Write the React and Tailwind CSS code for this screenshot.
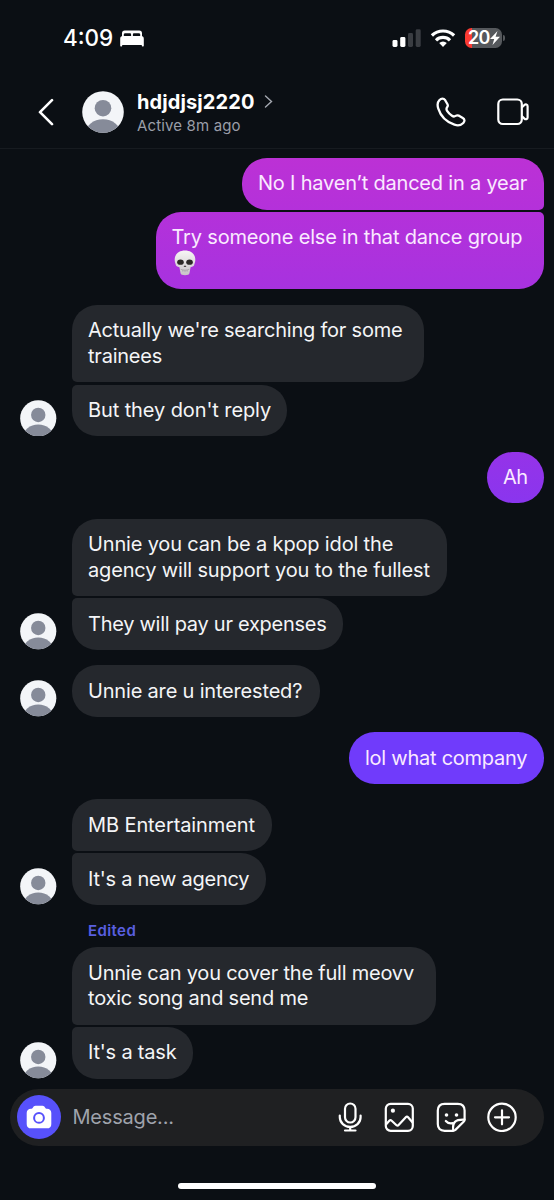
import React from "react";

function Avatar({ className }) {
  return (
    <svg viewBox="0 0 42 42" className={className} aria-hidden="true">
      <defs>
        <clipPath id="avatar-clip">
          <circle cx="21" cy="21" r="20.8" />
        </clipPath>
      </defs>
      <circle cx="21" cy="21" r="20.8" fill="#f3f5f8" />
      <g clipPath="url(#avatar-clip)" fill="#868b99">
        <circle cx="21" cy="17.2" r="8.3" />
        <ellipse cx="21" cy="42.5" rx="17.5" ry="14.3" />
      </g>
    </svg>
  );
}

function Skull() {
  return (
    <svg viewBox="0 0 24 28" className="ml-[1.500px] block h-[27px] w-[24px]" role="img" aria-label="skull">
      <defs>
        <linearGradient id="bone" x1="0" y1="0" x2="0" y2="1">
          <stop offset="0" stopColor="#f7f6f5" />
          <stop offset="1" stopColor="#c9c4c8" />
        </linearGradient>
      </defs>
      <path d="M12 .5C5.500.5 1.300 4.500 1.300 10c0 2.400.8 3.300 1 4.900.2 2 1.700 2.500 3.900 3l1.200 6.200c.3 1.500 2 2 4.600 2s4.300-.5 4.600-2l1.200-6.200c2.200-.5 3.700-1 3.900-3 .2-1.600 1-2.500 1-4.900C22.700 4.500 18.500.5 12 .5Z" fill="url(#bone)" />
      <ellipse cx="7.300" cy="12.600" rx="3.400" ry="2.700" fill="#2c2927" />
      <ellipse cx="16.700" cy="12.600" rx="3.400" ry="2.700" fill="#2c2927" />
      <path d="M12 15.700l-1.500 2h1l.5-.5.5.5h1z" fill="#2c2927" />
      <path d="M7.500 20c2.500 1.200 6.500 1.200 9 0M9.800 20.500v2M12 20.900v2M14.200 20.500v2" stroke="#99959b" strokeWidth=".6" fill="none" />
    </svg>
  );
}

function StatusBar() {
  return (
    <div className="flex h-[76px] items-center justify-between pr-[49px] pl-[63px]">
      <div className="flex items-center gap-[6px]">
        <span className="w-[51px] text-[22.5px] leading-none font-medium tracking-[0px] whitespace-nowrap">4:09</span>
        <svg viewBox="0 0 24 17" className="h-[17px] w-[24px]" fill="#fff">
          <path d="M2 7V3.200C2 1.400 3 .5 4.700.5h14.600c1.700 0 2.700.9 2.700 2.700V7h-1.800V4.800c0-1-.5-1.500-1.500-1.500h-4.400c-.9 0-1.400.5-1.400 1.400V6h-1.800V4.700c0-.9-.5-1.400-1.400-1.400H5.300c-1 0-1.500.5-1.500 1.500V7z" />
          <path d="M2.800 6h18.400c1.700 0 2.600 1 2.600 2.700v7.100c0 .4-.3.700-.7.700h-.6c-.4 0-.7-.3-.7-.7V15H2.200v.8c0 .4-.3.700-.7.700H.9c-.4 0-.7-.3-.7-.7V8.700C.2 7 1.100 6 2.800 6Z" />
        </svg>
      </div>
      <div className="flex items-center">
        <svg viewBox="0 0 29 19" className="mr-[9px] h-[19px] w-[29px]">
          <rect x=".5" y="11" width="5" height="7" rx="1.400" fill="#fff" />
          <rect x="8.200" y="8" width="5.200" height="10" rx="1.400" fill="#fff" />
          <rect x="16" y="4" width="5" height="14" rx="1.400" fill="#3a3d42" />
          <rect x="23.700" y=".3" width="5" height="17.700" rx="1.400" fill="#3a3d42" />
        </svg>
        <svg viewBox="0 0 26 19" className="mr-[9px] h-[19px] w-[26px]" fill="none" stroke="#fff" strokeWidth="3.200">
          <path d="M1.900 6.500a16 16 0 0 1 22.200 0" />
          <path d="M6 11.300a10 10 0 0 1 14 0" />
          <path d="M13 18l-3.800-3.900a5.500 5.500 0 0 1 7.600 0z" fill="#fff" stroke="none" />
        </svg>
        <div className="mt-[-1px] flex h-[20px] w-[37px] items-center overflow-hidden rounded-[6.500px] bg-linear-to-r from-[#fb3a32] from-20% to-[#55585c] to-20%">
          <span className="w-[23px] pl-[3px] text-[18px] leading-none font-semibold tracking-[-0.7px]">20</span>
          <svg viewBox="0 0 10 14" className="ml-[1.500px] h-[14px] w-[10px] shrink-0" fill="#fff">
            <path d="M7.500 0L0 8h4.200L2.500 14 10 5.800H5.600z" />
          </svg>
        </div>
        <div className="ml-[1px] h-[6px] w-[2px] rounded-r-full bg-[#55585c]" />
      </div>
    </div>
  );
}

function Header() {
  return (
    <header className="flex h-[73px] items-center border-b border-[#171b20] pr-[25px] pl-[37px]">
      <svg viewBox="0 0 18 28" className="h-[28px] w-[18px]" fill="none" stroke="#fff" strokeWidth="2.600" strokeLinecap="round" strokeLinejoin="round">
        <path d="M15 2.200L3 14.200l12 12" />
      </svg>
      <Avatar className="ml-[27px] h-[42px] w-[42px]" />
      <div className="ml-[13px] flex-1 pt-[2px]">
        <div className="flex items-center">
          <span className="w-[118px] text-[20px] leading-[25px] font-bold tracking-[0.1px] whitespace-nowrap">hdjdjsj2220</span>
          <svg viewBox="0 0 9 14" className="ml-[9px] h-[14px] w-[9px]" fill="none" stroke="#a5a9b1" strokeWidth="1.400" strokeLinecap="round">
            <path d="M1.500 1L7.500 6.500l-6 5.500" />
          </svg>
        </div>
        <div className="text-[15px] leading-[22px] tracking-[0.150px] text-[#9a9ea8]">Active 8m ago</div>
      </div>
      <svg viewBox="0 0 30 30" className="h-[30px] w-[30px]" fill="none" stroke="#fff" strokeWidth="2.300" strokeLinejoin="round">
        <path d="M3.300 3.300C5.400 1 7.700 1.100 9.200 3.200l2.300 4.100c.6 1.100.4 2-.4 3-.9 1.200-.9 2.200 0 3.600 1.200 1.900 2.800 3.500 4.900 4.900 1.400.9 2.500.9 3.600.1 1.100-.7 2-.8 3-.3l4.200 2.500c2 1.200 2.200 3.100.5 4.900-2.200 2.300-5.300 2.900-8.900 1.700C10.300 24.800 4.500 18.800 2.300 11.600 1.200 8.300 1.300 5.400 3.300 3.300Z" />
      </svg>
      <svg viewBox="0 0 32 28" className="ml-[31px] h-[28px] w-[32px]" fill="none" stroke="#fff" strokeWidth="2.200" strokeLinejoin="round">
        <rect x="1.300" y="1.500" width="23.500" height="24.500" rx="4.500" />
        <path d="M24.800 9.500l2.600-2.500c1.300-1.200 3.200-.6 3.200 1.200v11.200c0 1.800-1.900 2.400-3.200 1.200l-2.600-2.500" />
      </svg>
    </header>
  );
}

const inStack = { only: "rounded-[25px]", first: "rounded-[25px] rounded-bl-[5px]", last: "rounded-[25px] rounded-tl-[5px]" };

function Incoming({ children, pos = "only", className, avatar }) {
  return (
    <div className="flex items-end">
      <div className="w-[72px] shrink-0 pl-[20.250px]">{avatar && <Avatar className="block h-[36.500px] w-[36.500px]" />}</div>
      <div className={`bg-[#25282d] pt-[13.375px] pb-[12.375px] pl-[16px] text-[20px] leading-[25.750px] whitespace-nowrap text-[#f4f5f7] ${inStack[pos]} ${className}`}>{children}</div>
    </div>
  );
}

function Outgoing({ children, className }) {
  return (
    <div className="flex justify-end pr-[10.500px]">
      <div className={`pt-[13.250px] pb-[12.500px] pl-[16px] text-[20px] leading-[25.750px] whitespace-nowrap text-[#faeaff] ${className}`}>{children}</div>
    </div>
  );
}

function Composer() {
  return (
    <div className="mx-[10px] mt-[10.250px] flex h-[57px] items-center rounded-full bg-[#1f2022] pr-[26px] pl-[7px]">
      <div className="flex h-[44px] w-[44px] items-center justify-center rounded-full bg-[#5751fb]">
        <svg viewBox="0 0 26 24" className="mt-[-1px] h-[24px] w-[26px]">
          <path d="M9.500.7h7c1.300 0 1.900.8 2.500 1.700.5.900 1 1.200 2 1.300 2.700.1 4.300 1.700 4.300 4.400v10.800c0 3-1.500 4.400-4.500 4.400H5.200c-3 0-4.500-1.400-4.500-4.400V8.100c0-2.700 1.600-4.300 4.300-4.400 1-.1 1.500-.4 2-1.300C7.600 1.500 8.200.7 9.500.7Z" fill="#fff" />
          <circle cx="13" cy="12.900" r="4.900" fill="none" stroke="#5751fb" strokeWidth="2" />
        </svg>
      </div>
      <span className="ml-[11.500px] flex-1 text-[20px] tracking-[-0.2px] text-[#9fa3ac]">Message...</span>
      <div className="flex items-center text-white">
        <svg viewBox="0 0 24 30" className="h-[30px] w-[24px]" fill="none" stroke="currentColor" strokeWidth="2.200" strokeLinecap="round">
          <rect x="7" y="1.500" width="10.500" height="19" rx="5.250" />
          <path d="M1.800 13.500v1.800a10.400 9.600 0 0 0 20.800 0v-1.800M12.200 25v3.500M7 28.500h10.500" />
        </svg>
        <svg viewBox="0 0 30 30" className="ml-[22px] h-[30px] w-[30px]" fill="none" stroke="currentColor" strokeWidth="2.200" strokeLinejoin="round">
          <rect x="1.800" y="1.800" width="27" height="27" rx="4.800" />
          <path d="M2 22.500l3.300-3.700c.8-.9 1.500-.9 2.400-.1l4.800 4.500c.8.700 1.400.7 2.100-.1l7.200-7.800c.8-.9 1.500-.9 2.300 0l4.700 5.400" />
          <circle cx="8.900" cy="8.700" r="2.100" fill="currentColor" stroke="none" />
        </svg>
        <svg viewBox="0 0 30 30" className="ml-[21.500px] h-[30px] w-[30px]" fill="none" stroke="currentColor" strokeWidth="2.200" strokeLinejoin="round" strokeLinecap="round">
          <path d="M17 28.800H8.600c-4.500 0-6.800-2.300-6.800-6.800V8.600c0-4.500 2.300-6.800 6.800-6.800h13.200c4.500 0 6.800 2.300 6.800 6.800v8.800c0 1-.3 1.700-1 2.400l-8.200 8.100c-.7.600-1.400.9-2.400.9Z" />
          <path d="M17.200 28.300c-.9-8 1.800-11 11.300-10.600M9.800 19c1.800 2.200 4 2.700 6.800 2.200" />
          <circle cx="10.500" cy="13" r="1.800" fill="currentColor" stroke="none" />
          <circle cx="20.500" cy="13" r="1.800" fill="currentColor" stroke="none" />
        </svg>
        <svg viewBox="0 0 30 30" className="ml-[21.500px] h-[30px] w-[30px]" fill="none" stroke="currentColor" strokeWidth="2.200" strokeLinecap="round">
          <circle cx="15" cy="15.300" r="13.700" />
          <path d="M15 8.300v14M8 15.300h14" />
        </svg>
        <div className="w-[0.750px]" />
      </div>
    </div>
  );
}

export default function App() {
  return (
    <div className="flex h-[1200px] w-[554px] flex-col overflow-hidden bg-[#0b0f14] font-['Inter',sans-serif] text-white">
      <StatusBar />
      <Header />
      <main className="flex flex-col gap-[15.500px] pt-[9px]">
        <div className="flex flex-col gap-[2.500px]">
          <Outgoing className="w-[301.500px] rounded-[25px] rounded-br-[5px] bg-linear-to-b from-[#bc31d5] to-[#b431da] tracking-[-0.200px]">No I haven’t danced in a year</Outgoing>
          <Outgoing className="w-[388px] rounded-[25px] rounded-tr-[5px] bg-linear-to-b from-[#b431da] to-[#a732df] tracking-[-0.180px]">
            <div>Try someone else in that dance group</div>
            <div className="-mt-[1.500px] h-[27.250px]"><Skull /></div>
          </Outgoing>
        </div>
        <div className="flex flex-col gap-[2.500px]">
          <Incoming pos="first" className="w-[352px] tracking-[-0.220px]">Actually we're searching for some<br />trainees</Incoming>
          <Incoming pos="last" avatar className="w-[215px] tracking-[-0.100px]">But they don't reply</Incoming>
        </div>
        <Outgoing className="w-[56.500px] rounded-[25.750px] bg-linear-to-b from-[#9533e8] to-[#8a35ee] tracking-[-0.500px]">Ah</Outgoing>
        <div className="flex flex-col gap-[2.500px]">
          <Incoming pos="first" className="w-[375px] tracking-[-0.160px]">Unnie you can be a kpop idol the<br />agency will support you to the fullest</Incoming>
          <Incoming pos="last" avatar className="w-[271px] tracking-[-0.270px]">They will pay ur expenses</Incoming>
        </div>
        <Incoming avatar className="w-[247.500px] tracking-[-0.180px]">Unnie are u interested?</Incoming>
        <Outgoing className="w-[194.500px] rounded-[25.750px] bg-[#703bfb] tracking-[-0.250px]">lol what company</Outgoing>
        <div className="flex flex-col gap-[2.500px]">
          <Incoming pos="first" className="w-[200px] tracking-[-0.100px]">MB Entertainment</Incoming>
          <Incoming pos="last" avatar className="w-[193.500px] tracking-[-0.250px]">It's a new agency</Incoming>
        </div>
        <div className="flex flex-col">
          <div className="h-[27px] pt-px pl-[88px] text-[15px] leading-[20px] font-semibold tracking-[0.4px] text-[#595fe0]">Edited</div>
          <div className="flex flex-col gap-[2.500px]">
            <Incoming pos="first" className="w-[363.500px] tracking-[-0.220px]">Unnie can you cover the full meovv<br />toxic song and send me</Incoming>
            <Incoming pos="last" avatar className="w-[121px] tracking-[-0.200px]">It's a task</Incoming>
          </div>
        </div>
      </main>
      <Composer />
      <div className="mx-auto mt-[37px] h-[6.500px] w-[198px] rounded-full bg-white" />
    </div>
  );
}
